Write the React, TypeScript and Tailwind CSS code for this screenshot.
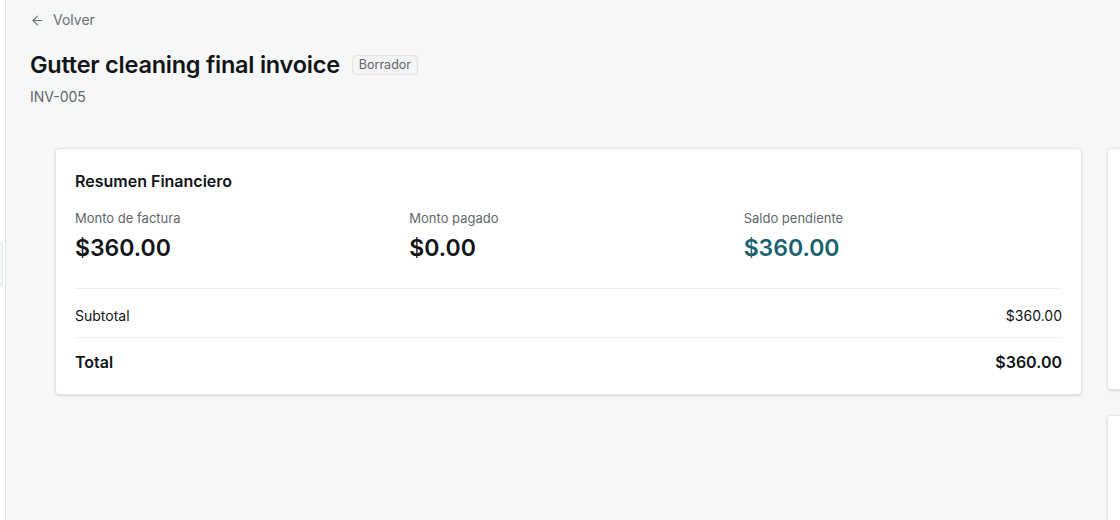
import { ArrowLeft } from 'lucide-react';

interface Stat {
  label: string;
  value: string;
  accent?: boolean;
}

export default function App() {
  const stats: Stat[] = [
    { label: 'Monto de factura', value: '$360.00' },
    { label: 'Monto pagado', value: '$0.00' },
    { label: 'Saldo pendiente', value: '$360.00', accent: true },
  ];

  return (
    <div
      className="flex h-[520px] w-[1120px] overflow-hidden bg-[#f6f7f7] text-[#111418]"
      style={{ fontFamily: 'Inter, "Noto Sans", sans-serif' }}
    >
      {/* Sidebar edge */}
      <div className="relative w-[6px] shrink-0 border-r border-[#e3e5e6] bg-white">
        <div className="absolute left-0 top-[242px] h-[43px] w-[3px] rounded-r-sm border border-l-0 border-[#dfe8e8] bg-[#f3f8f8]" />
      </div>

      <div className="flex-1 px-6 pt-[10px]">
        {/* Header */}
        <button className="flex h-5 items-center gap-2 text-sm text-[#6b7075]">
          <ArrowLeft size={15} strokeWidth={1.75} />
          <span>Volver</span>
        </button>

        <div className="mt-[19px] flex items-center gap-3">
          <h1 className="text-[23.5px] font-semibold leading-8 tracking-[-0.01em]">Gutter cleaning final invoice</h1>
          <span className="rounded border border-[#e1e3e5] bg-[#f3f4f5] px-[6px] py-px text-[12.5px] leading-4 text-[#5f6469]">
            Borrador
          </span>
        </div>
        <p className="mt-[6px] text-sm leading-5 text-[#62676c]">INV-005</p>

        {/* Content grid */}
        <div className="mt-[41px] ml-[25px] flex items-start gap-[25px]">
          <div className="w-[1027px] shrink-0 rounded border border-[#e3e5e7] bg-white px-[19px] pt-5 pb-5 shadow-sm">
            <h2 className="text-base font-semibold leading-6">Resumen Financiero</h2>

            <div className="mt-[15px] grid grid-cols-3 gap-4">
              {stats.map((s) => (
                <div key={s.label}>
                  <p className="text-[13px] leading-5 text-[#62676c]">{s.label}</p>
                  <p className={`mt-1 text-[23px] font-semibold leading-8 ${s.accent ? 'text-[#19626f]' : 'text-[#111418]'}`}>
                    {s.value}
                  </p>
                </div>
              ))}
            </div>

            <div className="mt-[24px] border-t border-[#eceef0]">
              <div className="flex items-center justify-between pt-[17px] pb-[11px] text-sm leading-5">
                <span>Subtotal</span>
                <span>$360.00</span>
              </div>
              <div className="flex items-center justify-between border-t border-[#eceef0] pt-3 text-base font-semibold leading-6">
                <span>Total</span>
                <span>$360.00</span>
              </div>
            </div>
          </div>

          {/* Side column */}
          <div className="flex w-[300px] shrink-0 flex-col gap-[25px]">
            <div className="h-[242px] rounded border border-[#e3e5e7] bg-white shadow-sm" />
            <div className="h-[120px] rounded border border-[#e3e5e7] bg-white shadow-sm" />
          </div>
        </div>
      </div>
    </div>
  );
}
